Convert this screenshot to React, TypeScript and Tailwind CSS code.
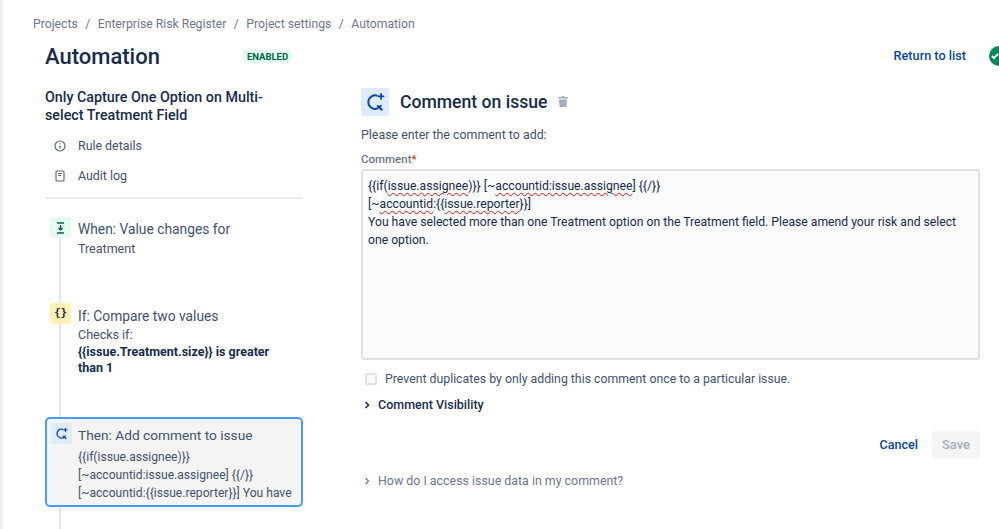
import React from "react";

const W = ({ children }: { children: React.ReactNode }) => (
  <span className="underline decoration-wavy decoration-[#e01010] decoration-1 underline-offset-2">{children}</span>
);

const CommentIcon = ({ size }: { size: number }) => (
  <svg width={size} height={size} viewBox="0 0 16 16" fill="none">
    <path d="M9.5 2.9A5.4 5.4 0 1 0 12.6 11" stroke="#0747a6" strokeWidth="1.6" strokeLinecap="round" />
    <path d="M10.2 11.2l3.2 3" stroke="#0747a6" strokeWidth="1.6" strokeLinecap="round" />
    <path d="M12.8 1.5v4M10.8 3.5h4" stroke="#0747a6" strokeWidth="1.4" strokeLinecap="round" />
  </svg>
);

export default function App() {
  return (
    <div className="relative w-[999px] h-[529px] overflow-hidden bg-white border-l-[3px] border-[#f1f1f1] font-['Roboto','Open_Sans',sans-serif] text-[#42526e]">
      <nav className="flex items-center h-[48px] pl-[30px] text-[12.2px] text-[#6b778c] gap-[7.5px]">
        <span>Projects</span><span>/</span>
        <span>Enterprise Risk Register</span><span>/</span>
        <span>Project settings</span><span>/</span>
        <span>Automation</span>
      </nav>

      <header className="flex items-center h-[16px] pl-[42px] pr-[33px]">
        <h1 className="text-[22px] font-medium text-[#172b4d] w-[198px] leading-none mt-[2px]">Automation</h1>
        <span className="h-[13px] w-[49px] rounded-[3px] bg-[#e3fcef] text-[#006644] text-[9.5px] font-bold leading-[13px] text-center">ENABLED</span>
        <a className="ml-auto text-[#0747a6] text-[12.7px] font-medium">Return to list</a>
      </header>
      <div className="absolute left-[986px] top-[46px] w-[20px] h-[20px] rounded-full bg-[#00875a] flex items-center pl-[2px]">
        <svg width="10" height="10" viewBox="0 0 10 10" fill="none"><path d="M1 5l2 2 4-4" stroke="#fff" strokeWidth="2" /></svg>
      </div>

      <div className="flex pl-[42px] pt-[24px]">
        <aside className="relative w-[257px] shrink-0">
          <h2 className="text-[14.3px] leading-[18px] font-medium text-[#172b4d] pr-[10px]">Only Capture One Option on Multi-select Treatment Field</h2>
          <div className="flex items-center h-[30px] mt-[7px] pl-[9px] gap-[12px] text-[12.4px]">
            <svg width="12" height="12" viewBox="0 0 12 12" fill="none"><circle cx="6" cy="6" r="5" stroke="#5e6c84" strokeWidth="1.2" /><path d="M6 5.5v3M6 3.2v1" stroke="#5e6c84" strokeWidth="1.3" /></svg>
            <span>Rule details</span>
          </div>
          <div className="flex items-center h-[30px] pl-[10px] gap-[13px] text-[12.4px]">
            <svg width="10" height="12" viewBox="0 0 10 12" fill="none"><rect x="1" y="1" width="8" height="10" rx="1" stroke="#5e6c84" strokeWidth="1.2" /><path d="M3 3.5h4M3 5.5h3" stroke="#5e6c84" strokeWidth="1.2" /></svg>
            <span>Audit log</span>
          </div>
          <div className="h-[2px] bg-[#ebecf0] mt-[6px] mb-[18px]" />

          <div className="absolute left-[14px] top-[130px] w-[2px] h-[400px] bg-[#e4e6ec]" />

          <div className="relative flex h-[86px] pl-[5px] gap-[7px]">
            <div className="w-[21px] h-[21px] rounded-[3px] bg-[#e3fcef] flex items-center justify-center shrink-0">
              <svg width="11" height="12" viewBox="0 0 11 12" fill="none"><path d="M2 1h7M2 11h7M5.5 3v5M3.5 6l2 2 2-2" stroke="#006644" strokeWidth="1.4" /></svg>
            </div>
            <div>
              <div className="text-[13.8px] leading-[20px] pt-[2px]">When: Value changes for</div>
              <div className="text-[12.5px] leading-[18px] mt-[1px]">Treatment</div>
            </div>
          </div>

          <div className="relative flex h-[114px] pl-[5px] gap-[7px]">
            <div className="w-[21px] h-[21px] rounded-[3px] bg-[#fff0b3] flex items-center justify-center shrink-0 text-[#172b4d] text-[11px] font-bold font-['DejaVu_Sans_Mono',monospace]">{"{}"}</div>
            <div>
              <div className="text-[13.8px] leading-[20px] pt-[3px]">If: Compare two values</div>
              <div className="text-[12.5px] leading-[17px] mb-[1px]">Checks if:</div>
              <div className="text-[12.5px] leading-[16px] font-bold text-[#172b4d] pr-[8px]">{"{{issue.Treatment.size}} is greater than 1"}</div>
            </div>
          </div>

          <div className="relative flex h-[90px] w-[258px] rounded-[5px] border-2 border-[#4c9aff] bg-[#f4f4f4] pl-[4px] pt-[4px] gap-[6px]">
            <div className="w-[21px] h-[21px] rounded-[3px] bg-[#deebff] flex items-center justify-center shrink-0"><CommentIcon size={13} /></div>
            <div className="text-[12.1px] leading-[18px] whitespace-nowrap pt-[2px]">
              <div className="text-[13.7px] leading-[20px] mb-[3px]">Then: Add comment to issue</div>
              <div>{"{{if(issue.assignee)}}"}</div>
              <div>{"[~accountid:issue.assignee] {{/}}"}</div>
              <div>{"[~accountid:{{issue.reporter}}] You have"}</div>
            </div>
          </div>
        </aside>

        <main className="ml-[59px] w-[619px] -mt-[1px]">
          <div className="flex items-center h-[29px]">
            <div className="w-[28px] h-[28px] rounded-[3px] bg-[#deebff] flex items-center justify-center"><CommentIcon size={20} /></div>
            <h2 className="ml-[11px] mt-[2px] text-[17.6px] font-medium text-[#172b4d]">Comment on issue</h2>
            <svg className="ml-[9px]" width="12" height="13" viewBox="0 0 12 13" fill="#a5adba"><path d="M1 2h3.5l.5-1h2l.5 1H11v1.5H1zM2 4.5h8L9.3 12H2.7z" /></svg>
          </div>
          <p className="text-[12.4px] leading-[18px] mt-[10px]">Please enter the comment to add:</p>
          <div className="text-[11.5px] leading-[14px] font-medium text-[#6b778c] mt-[8px]">Comment<span className="text-[#de350b]">*</span></div>
          <div className="mt-[3px] h-[191px] rounded-[3px] border-2 border-[#dfe1e6] bg-[#fafbfc] px-[5px] pt-[6px] text-[12.2px] leading-[18px] text-[#172b4d]">
            {"{{if("}<W>issue.assignee</W>{")}}"} [~<W>accountid:issue.assignee</W>] {"{{/}}"}<br />
            [~<W>accountid</W>:{"{{"}<W>issue.reporter</W>{"}}"}]<br />
            You have selected more than one Treatment option on the Treatment field. Please amend your risk and select one option.
          </div>
          <label className="flex items-center mt-[10px] pl-[4px] gap-[8px] text-[12.3px] leading-[18px]">
            <span className="w-[12px] h-[12px] rounded-[2px] border-2 border-[#dfe1e6] bg-[#fafbfc]" />
            <span>Prevent duplicates by only adding this comment once to a particular issue.</span>
          </label>
          <div className="flex items-center mt-[8px] pl-[3px] gap-[8px] text-[12.5px] leading-[18px] font-medium text-[#172b4d]">
            <svg width="6" height="8" viewBox="0 0 6 8" fill="none"><path d="M1.5 1l3 3-3 3" stroke="#172b4d" strokeWidth="1.6" /></svg>
            <span>Comment Visibility</span>
          </div>
          <div className="flex items-center justify-end mt-[17px] h-[28px]">
            <a className="text-[#0747a6] text-[12.6px] font-medium mr-[14px]">Cancel</a>
            <span className="w-[48px] h-[28px] rounded-[3px] bg-[#f4f5f7] text-[#a5adba] text-[13px] font-medium flex items-center justify-center">Save</span>
          </div>
          <div className="flex items-center mt-[13px] pl-[3px] gap-[8px] text-[12.4px] leading-[18px] text-[#6b778c]">
            <svg width="6" height="8" viewBox="0 0 6 8" fill="none"><path d="M1.5 1l3 3-3 3" stroke="#6b778c" strokeWidth="1.2" /></svg>
            <span>How do I access issue data in my comment?</span>
          </div>
        </main>
      </div>
    </div>
  );
}
